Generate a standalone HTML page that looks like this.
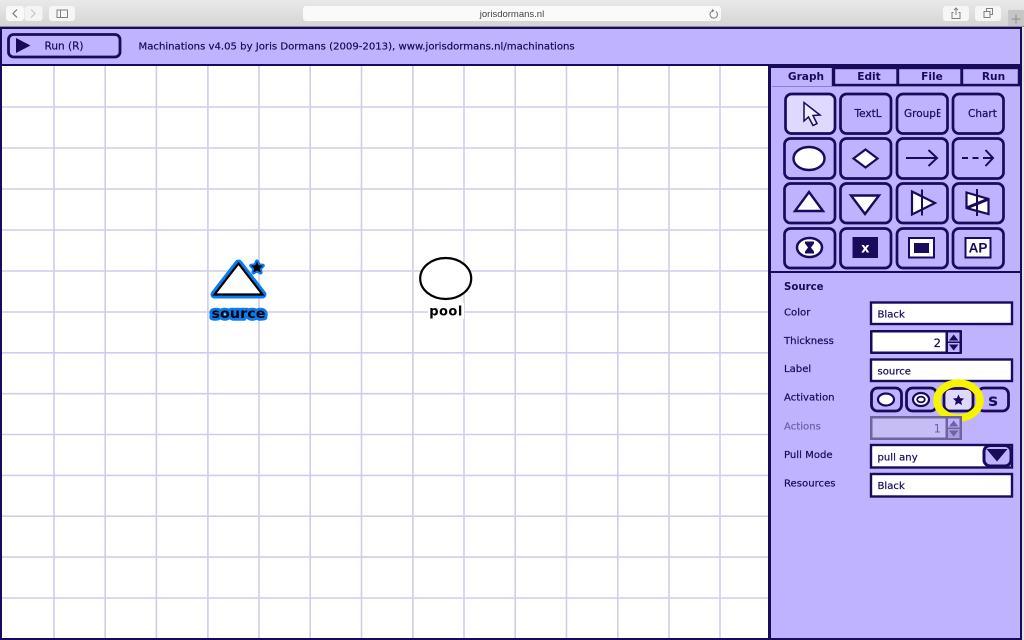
<!DOCTYPE html>
<html><head><meta charset="utf-8"><style>
html,body{margin:0;padding:0;background:#fff;width:1024px;height:640px;overflow:hidden}
svg{display:block;filter:blur(.35px)}
text{font-family:"DejaVu Sans","Liberation Sans",sans-serif;fill:#1a0a5c}
.s{font-size:10.1px;stroke:#1a0a5c;stroke-width:.2px}
.l{font-size:10.5px;stroke:#1a0a5c;stroke-width:.2px}
.t{font-size:10.600px;font-weight:bold}
.i{fill:#fff;stroke:#1a0a5c;stroke-width:2.400}
.g{stroke:#d2cbe9;stroke-width:1.600}
</style></head><body>
<svg width="1024" height="640" viewBox="0 0 1024 640" xmlns="http://www.w3.org/2000/svg">
<defs>
<linearGradient id="tb" x1="0" y1="0" x2="0" y2="1"><stop offset="0" stop-color="#e9e9e9"/><stop offset="1" stop-color="#d4d4d4"/></linearGradient>
<clipPath id="gc"><rect x="900" y="100" width="40.500" height="28"/></clipPath>
</defs>
<!-- browser bar -->
<rect width="1024" height="27" fill="url(#tb)"/>
<rect x="6" y="6" width="18" height="15" rx="3" fill="#f8f8f8"/>
<rect x="24.500" y="6" width="18" height="15" rx="3" fill="#f4f4f4"/>
<path d="M17 9.500l-4 4 4 4" fill="none" stroke="#777" stroke-width="1.200"/>
<path d="M31 9.500l4 4-4 4" fill="none" stroke="#c4c4c4" stroke-width="1.200"/>
<rect x="49" y="6" width="26" height="15" rx="3" fill="#f6f6f6"/>
<rect x="57" y="10" width="10.500" height="7.500" fill="none" stroke="#808080"/><path d="M60.500 10v7.500" stroke="#808080"/>
<rect x="303" y="6" width="418" height="15" rx="3" fill="#fafafa"/>
<text x="512" y="17" text-anchor="middle" style="font-family:'Liberation Sans',sans-serif;font-size:9.500px;fill:#444">jorisdormans.nl</text>
<path d="M716 11.500a3.700 3.700 0 1 1-3.500-.6" fill="none" stroke="#777"/><path d="M712 9l2.500 1.800-2.500 1.500z" fill="#777"/>
<rect x="943" y="6" width="26" height="15" rx="3" fill="#f6f6f6"/>
<path d="M953.500 12.500h-1.500v6h8v-6h-1.500M956 15v-7M954 10l2-2 2 2" fill="none" stroke="#808080"/>
<rect x="975" y="6" width="26" height="15" rx="3" fill="#f6f6f6"/>
<rect x="984" y="11.500" width="6" height="6" fill="none" stroke="#808080"/><path d="M986.500 11v-2.500h6v6h-2" fill="none" stroke="#808080"/>
<rect x="1008" y="10" width="16" height="17" fill="#c6c6c6"/><path d="M1011.500 19h9M1016 14.500v9" stroke="#8a8a8a"/>
<rect y="26" width="1024" height="1" fill="#8c8c8c"/>
<!-- app -->
<rect x="0" y="27" width="1024" height="613" fill="#1a0a5c"/>
<rect x="1022" y="27" width="2" height="613" fill="#e4e4e4"/>
<rect x="2" y="29" width="1018" height="35" fill="#bfb2ff"/>
<rect x="2" y="66" width="766" height="572" fill="#fff"/>
<rect x="771" y="66" width="249" height="572" fill="#bfb2ff"/>
<!-- grid -->
<g class="g">
<path d="M54 66V638M105.200 66V638M156.400 66V638M207.900 66V638M259 66V638M310.200 66V638M361.500 66V638M412.900 66V638M464 66V638M515.200 66V638M566.500 66V638M617.800 66V638M669 66V638M720 66V638"/>
<path d="M2 107H768M2 148H768M2 189H768M2 230H768M2 271H768M2 312H768M2 352.800H768M2 393.700H768M2 434.500H768M2 475.400H768M2 516.200H768M2 557.100H768M2 598H768"/>
</g>
<!-- run button -->
<rect x="8.500" y="34.500" width="111.500" height="22.500" rx="5" fill="#bfb2ff" stroke="#1a0a5c" stroke-width="2.800"/>
<path d="M16 38L30.500 45.500L16 53z" fill="#1a0a5c"/>
<text class="l" x="44.500" y="49.500">Run (R)</text>
<text class="s" x="138.500" y="49.500">Machinations v4.05 by Joris Dormans (2009-2013), www.jorisdormans.nl/machinations</text>
<!-- tabs -->
<rect x="771" y="66" width="249" height="2" fill="#1a0a5c"/>
<g fill="#bfb2ff" stroke="#1a0a5c" stroke-width="2.400">
<rect x="834" y="68" width="63.500" height="17"/>
<rect x="898" y="68" width="63.500" height="17"/>
<rect x="962" y="68" width="57" height="17"/>
</g>
<rect x="772" y="68" width="61" height="19" fill="#bfb2ff"/>
<path d="M833 68v18" stroke="#1a0a5c" stroke-width="2.400"/>
<path d="M772 86.500H1020" stroke="#7c6cc8" stroke-width=".8"/>
<text class="t" x="806" y="80" text-anchor="middle">Graph</text>
<text class="t" x="869" y="80" text-anchor="middle">Edit</text>
<text class="t" x="932" y="80" text-anchor="middle">File</text>
<text class="t" x="993.500" y="80" text-anchor="middle">Run</text>
<!-- tool buttons -->
<g stroke="#1a0a5c" stroke-width="2.700" fill="#bfb2ff">
<rect x="785.500" y="94" width="49.500" height="39.500" rx="6" fill="#dfd9ff"/>
<rect x="840.500" y="94" width="50.500" height="39.500" rx="6"/>
<rect x="897" y="94" width="50.500" height="39.500" rx="6"/>
<rect x="953" y="94" width="50.500" height="39.500" rx="6"/>
<rect x="784.500" y="138.500" width="50.500" height="40" rx="6"/>
<rect x="840.500" y="138.500" width="50.500" height="40" rx="6"/>
<rect x="897" y="138.500" width="50.500" height="40" rx="6"/>
<rect x="953" y="138.500" width="50.500" height="40" rx="6"/>
<rect x="784.500" y="183.500" width="50.500" height="39.500" rx="6"/>
<rect x="840.500" y="183.500" width="50.500" height="39.500" rx="6"/>
<rect x="897" y="183.500" width="50.500" height="39.500" rx="6"/>
<rect x="953" y="183.500" width="50.500" height="39.500" rx="6"/>
<rect x="784.500" y="228.500" width="50.500" height="39.500" rx="6"/>
<rect x="840.500" y="228.500" width="50.500" height="39.500" rx="6"/>
<rect x="897" y="228.500" width="50.500" height="39.500" rx="6"/>
<rect x="953" y="228.500" width="50.500" height="39.500" rx="6"/>
</g>
<!-- cursor -->
<path d="M804 102.500V121l4.500-4 4.500 8.500 4-2-4-8 7-.5z" fill="#efecff" stroke="#1a0a5c" stroke-width="1.500"/>
<text class="l" x="854.500" y="117">TextL</text>
<text class="l" x="904" y="117" clip-path="url(#gc)">GroupE</text>
<text class="l" x="968" y="117">Chart</text>
<!-- row 2 -->
<ellipse cx="809" cy="158.500" rx="15.500" ry="11.500" fill="#fff" stroke="#1a0a5c" stroke-width="2.400"/>
<path d="M865.500 149.500l12 9-12 9-12-9z" fill="#fff" stroke="#1a0a5c" stroke-width="2.200"/>
<path d="M906 158H937M928.500 150l8.500 8-8.500 8" fill="none" stroke="#1a0a5c" stroke-width="2"/>
<path d="M962 158H968M972.500 158H978.500M983 158H992M985.500 150l7.500 8-7.500 8" fill="none" stroke="#1a0a5c" stroke-width="2"/>
<!-- row 3 -->
<path d="M809 192l14 19h-28z" fill="#fff" stroke="#1a0a5c" stroke-width="2.400"/>
<path d="M851 195.500h28l-14 18.500z" fill="#fff" stroke="#1a0a5c" stroke-width="2.400"/>
<path d="M912 191.500l23 11.500-23 11.500z" fill="#fff" stroke="#1a0a5c" stroke-width="2.200"/>
<path d="M922 189.500v26" stroke="#1a0a5c" stroke-width="2"/>
<path d="M966.500 192.500l22 6.500v15l-22-6z" fill="#fff" stroke="#1a0a5c" stroke-width="2.200"/>
<path d="M966.500 208l22-9" stroke="#1a0a5c" stroke-width="3"/>
<path d="M977 189v27" stroke="#1a0a5c" stroke-width="2"/>
<!-- row 4 -->
<ellipse cx="809.500" cy="247.500" rx="12.500" ry="9.500" fill="#fff" stroke="#1a0a5c" stroke-width="2.500"/>
<path d="M805 241.500h9v2l-3 4 3 4v2h-9v-2l3-4-3-4z" fill="#1a0a5c"/>
<rect x="852.500" y="237" width="25.500" height="21" fill="#1a0a5c"/>
<text x="865.300" y="252.500" text-anchor="middle" style="font-size:13px;font-weight:bold;fill:#fff">x</text>
<rect x="909" y="238" width="25" height="19.500" fill="#fff" stroke="#1a0a5c" stroke-width="2"/>
<rect x="914" y="243" width="15" height="10" fill="#1a0a5c"/>
<rect x="965.500" y="238" width="25" height="19.500" fill="#fff" stroke="#1a0a5c" stroke-width="2"/>
<text x="978" y="252.500" text-anchor="middle" style="font-family:'Liberation Sans',sans-serif;font-size:13.500px;font-weight:bold;">AP</text>
<!-- divider -->
<rect x="771" y="271" width="249" height="2" fill="#1a0a5c"/>
<!-- properties -->
<text class="t" x="784" y="290" style="font-size:10.200px">Source</text>
<text class="s" x="784" y="315.500">Color</text>
<text class="s" x="784" y="344">Thickness</text>
<text class="s" x="784" y="372">Label</text>
<text class="s" x="784" y="400.500">Activation</text>
<text class="s" x="784" y="429.500" style="fill:#6e63a6;stroke:#6e63a6">Actions</text>
<text class="s" x="784" y="458">Pull Mode</text>
<text class="s" x="784" y="486.500">Resources</text>
<rect class="i" x="871" y="302.500" width="141" height="21.500"/>
<text class="s" x="877.500" y="317.500">Black</text>
<rect x="870" y="330" width="92" height="24" rx="1" fill="#1a0a5c"/>
<rect x="872.500" y="332.500" width="73" height="19" fill="#fff"/>
<text class="l" x="941" y="347" text-anchor="end" style="font-size:11.500px">2</text>
<rect x="948" y="332.500" width="11.500" height="9" fill="#bfb2ff"/><rect x="948" y="343" width="11.500" height="9" fill="#bfb2ff"/>
<path d="M949 340.500l4.700-6 4.700 6zM949 344.500h9.400l-4.700 6z" fill="#1a0a5c"/>
<rect class="i" x="871" y="359.500" width="141" height="21.500"/>
<text class="s" x="877.500" y="374.500">source</text>
<!-- activation -->
<rect x="871.500" y="388" width="30" height="23" rx="6" fill="#bfb2ff" stroke="#1a0a5c" stroke-width="2.800"/>
<ellipse cx="886" cy="399.500" rx="8" ry="6" fill="#fff" stroke="#1a0a5c" stroke-width="2.200"/>
<rect x="906.500" y="388" width="30" height="23" rx="6" fill="#bfb2ff" stroke="#1a0a5c" stroke-width="2.800"/>
<ellipse cx="921" cy="399.500" rx="8" ry="6.500" fill="#fff" stroke="#1a0a5c" stroke-width="2.200"/>
<ellipse cx="921" cy="399.500" rx="3.800" ry="2.800" fill="#fff" stroke="#1a0a5c" stroke-width="1.800"/>
<rect x="978" y="388" width="30.500" height="23" rx="6" fill="#bfb2ff" stroke="#1a0a5c" stroke-width="2.800"/>
<text x="993" y="406" text-anchor="middle" style="font-size:16.500px;font-weight:bold">s</text>
<rect x="944" y="388.500" width="29" height="22.500" rx="6" fill="#dfd9ff" stroke="#1a0a5c" stroke-width="2.800"/>
<path d="M958.500 394.500l1.700 3.600 3.900.4-2.900 2.700.8 3.900-3.500-2-3.500 2 .8-3.900-2.900-2.700 3.900-.4z" fill="#1a0a5c"/>
<ellipse cx="958.500" cy="400.500" rx="21.500" ry="17.500" fill="none" stroke="#f5f500" stroke-width="7.500"/>
<!-- actions disabled -->
<rect x="870" y="416" width="92" height="24" fill="#6e639f"/>
<rect x="872.500" y="418.500" width="73" height="19" fill="#c7bdf5"/>
<text class="l" x="941" y="432.500" text-anchor="end" style="font-size:11.500px;fill:#6e63a6;stroke:none">1</text>
<rect x="948" y="418.500" width="11.500" height="9" fill="#bfb2ff"/><rect x="948" y="429" width="11.500" height="9" fill="#a99cdf"/>
<path d="M949 426.500l4.700-6 4.700 6zM949 430.500h9.400l-4.700 6z" fill="#6e639f"/>
<!-- pull mode -->
<rect class="i" x="871" y="445" width="141" height="22.500"/>
<text class="s" x="877.500" y="460.500">pull any</text>
<rect x="984" y="445.500" width="27" height="20.500" rx="6" fill="#bfb2ff" stroke="#1a0a5c" stroke-width="3"/>
<path d="M986.500 449h21l-10.500 12.500z" fill="#1a0a5c"/>
<rect class="i" x="871" y="474" width="141" height="22.500"/>
<text class="s" x="877.500" y="489">Black</text>
<!-- source node -->
<path d="M238.500 263.500L262.500 294.500H214.500z" fill="none" stroke="#0a7cf0" stroke-width="8" stroke-linejoin="round"/>
<path d="M238.500 263.500L262.500 294.500H214.500z" fill="#fff" stroke="#000" stroke-width="2.200"/>
<path d="M257 261.500l1.700 3.700 4.100.5-3 2.800.8 4-3.600-2-3.600 2 .8-4-3-2.800 4.100-.5z" fill="#000" stroke="#0a7cf0" stroke-width="4" paint-order="stroke" stroke-linejoin="round"/>
<text x="238.500" y="318" text-anchor="middle" textLength="54" lengthAdjust="spacingAndGlyphs" style="font-size:13.500px;font-weight:bold;fill:#000;stroke:#0a7cf0;stroke-width:5.500px;paint-order:stroke;stroke-linejoin:round">source</text>
<!-- pool node -->
<ellipse cx="445.700" cy="278.500" rx="25.500" ry="20.500" fill="#fff" stroke="#000" stroke-width="2.200"/>
<rect x="428" y="303" width="36" height="16" fill="#fff"/>
<text x="446" y="315.500" text-anchor="middle" style="font-size:13px;font-weight:bold;fill:#000;letter-spacing:.5px">pool</text>
</svg>
</body></html>
